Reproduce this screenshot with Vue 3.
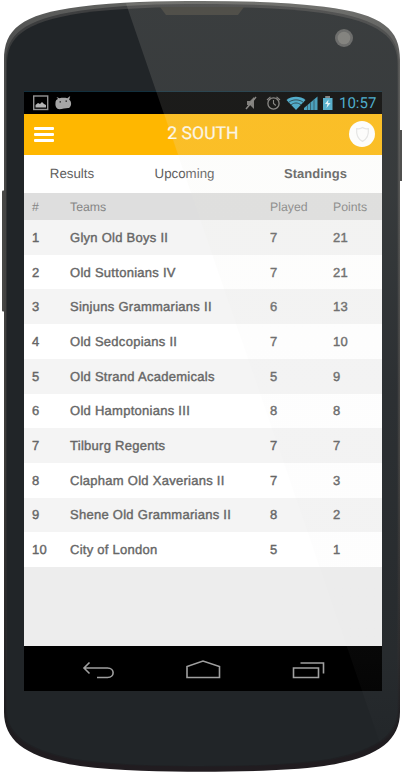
<script setup>
const tabs = [
  { label: 'Results', active: false },
  { label: 'Upcoming', active: false },
  { label: 'Standings', active: true },
]
const rows = [
  { team: 'Glyn Old Boys II', played: 7, points: 21 },
  { team: 'Old Suttonians IV', played: 7, points: 21 },
  { team: 'Sinjuns Grammarians II', played: 6, points: 13 },
  { team: 'Old Sedcopians II', played: 7, points: 10 },
  { team: 'Old Strand Academicals', played: 5, points: 9 },
  { team: 'Old Hamptonians III', played: 8, points: 8 },
  { team: 'Tilburg Regents', played: 7, points: 7 },
  { team: 'Clapham Old Xaverians II', played: 7, points: 3 },
  { team: 'Shene Old Grammarians II', played: 8, points: 2 },
  { team: 'City of London', played: 5, points: 1 },
]
</script>

<template>
  <div class="device">
    <svg class="shell" viewBox="0 0 402 772" aria-hidden="true">
      <defs>
        <linearGradient id="rim" x1="0" y1="0" x2="0" y2="1">
          <stop offset="0" stop-color="#60615f" />
          <stop offset=".06" stop-color="#4b4c4c" />
          <stop offset=".6" stop-color="#3c3b39" />
          <stop offset=".93" stop-color="#1d1c1f" />
          <stop offset="1" stop-color="#211c20" />
        </linearGradient>
        <linearGradient id="edge" x1="0" y1="0" x2="0" y2="1">
          <stop offset="0" stop-color="#3f4041" />
          <stop offset=".1" stop-color="#333536" />
          <stop offset=".85" stop-color="#28292b" />
          <stop offset=".95" stop-color="#1f2023" />
        </linearGradient>
      </defs>
      <rect x="2" y="190.500" width="5" height="121" rx="1" fill="#484846" />
      <rect x="397" y="130" width="6" height="51" rx="1" fill="#50504f" />
      <path d="M4 60C4 30 20 14 80 6.700C118 2 160 1 202 1S286 2 324 6.700C384 14 400 30 400 60V712C400 742 376 758 324 766C286 771 240 771.700 202 771.700S118 771 80 766C28 758 4 742 4 712Z" fill="url(#rim)" />
      <path d="M6 62C6 36 22 19 81 10.500C119 5 160 4 202 4S285 5 323 10.500C382 19 398.500 36 398.500 62V711C398.500 736 375 753 323 761C285 766 240 766.500 202 766.500S119 766 81 761C29 753 6 736 6 711Z" fill="url(#edge)" />
      <path d="M7 64C7 38 23 22 82 13C120 8 160 7 202 7S284 8 322 13C381 22 397.500 38 397.500 64V710C397.500 735 374 752 322 760C284 765 240 766 202 766S120 765 82 760C30 752 7 735 7 710Z" fill="#212528" />
      <path d="M160 7H244L238 15H166Z" fill="#3b3a35" />
      <circle cx="344" cy="38" r="9" fill="#5c5d5d" />
      <circle cx="344" cy="38" r="6.300" fill="#767673" />
    </svg>

    <main class="screen">
      <div class="status">
        <svg class="notices" viewBox="0 0 50 22">
          <rect x="9.700" y="4" width="14" height="13.500" fill="none" stroke="#939393" stroke-width="1.400" />
          <path d="M11.500 15.500V13L14 11L16 12L18 10L20 12L22 13V15.500Z" fill="#b4b4b4" />
          <path d="M31.500 10.500C31.500 8.500 32.500 7.500 34 7L32.500 5L35.500 6.300C38 5.700 41 5.700 43.300 6.300L46.200 4L45.200 7.700C48 9.500 47.600 14.500 45 16C42 15.600 36 18 33.500 16.800C31.500 15.500 31.200 13 31.500 10.500Z" fill="#a5a5a5" />
          <path d="M35.500 9.800H37M41.500 9.200H43" stroke="#222" stroke-width="1.300" />
        </svg>
        <svg class="signals" viewBox="0 0 92 22">
          <g fill="none" stroke="#7d7b79">
            <path d="M5 9H8L12 5V17L8 13H5Z" fill="#747270" stroke="none" />
            <path d="M4 17L14 5" stroke-width="1.500" />
            <circle cx="31.500" cy="11.500" r="5.600" stroke-width="1.300" />
            <path d="M31.500 8V11.500L33.800 13.500M25 8L28.500 4.800M34.500 4.800L38 8" stroke-width="1.100" />
          </g>
          <path d="M44.500 8C49.500 3.600 58.500 3.600 63.500 8L54 18Z" fill="#3fa5c8" />
          <path d="M46.500 10.500C50.500 7 57.500 7 61.500 10.500M49 13C52 10.300 56 10.300 59 13" fill="none" stroke="#1b3b48" stroke-width="1" />
          <path d="M62 18V16L75.500 4.500V18Z" fill="#3797b9" />
          <path d="M65.500 13V18M68.500 10V18M72 7.500V18" stroke="#1c4252" stroke-width=".8" />
          <path d="M81 6H83.500V4H88V6H90.500V18H81Z" fill="#46a8c9" />
          <path d="M83.500 4H88V6H83.500Z" fill="#777" />
          <path d="M86.500 7.500L83 12H85.400L84.500 16L88.500 11H86Z" fill="#e2f3f8" />
        </svg>
        <span class="clock">10:57</span>
      </div>

      <header class="bar">
        <span class="burger"><i></i><i></i><i></i></span>
        <h1>2 SOUTH</h1>
        <span class="badge">
          <svg viewBox="0 0 14 16">
            <path d="M7 1.500C8.500 2.800 10.500 2.800 12.500 2.500C13 8 12 12 7 14.500C2 12 1 8 1.500 2.500C3.500 2.800 5.500 2.800 7 1.500Z" fill="none" stroke="#e6e6e6" stroke-width="1.200" />
          </svg>
        </span>
      </header>

      <nav class="tabs">
        <span v-for="t in tabs" :key="t.label" class="tab" :class="{ active: t.active }">{{ t.label }}</span>
      </nav>

      <div class="line head">
        <span>#</span><span>Teams</span><span>Played</span><span>Points</span>
      </div>
      <div class="rows">
        <div v-for="(r, i) in rows" :key="r.team" class="line row">
          <span>{{ i + 1 }}</span><span>{{ r.team }}</span><span>{{ r.played }}</span><span>{{ r.points }}</span>
        </div>
      </div>
      <div class="rest"></div>

      <footer class="keys">
        <svg viewBox="0 0 358 45" fill="none" stroke="#a0a0a0" stroke-width="1.600">
          <path d="M65.500 16.500L60 22L65.500 27.500M60 22H83.500C91 22 91 31.500 83.500 31.500H73" />
          <path d="M163 31.500V20.500L179 15L195.500 20.500V31.500Z" />
          <path d="M269.500 22H294.500V31.500H269.500ZM276.500 17H299.500V27.500" />
        </svg>
      </footer>
    </main>

    <svg class="glare" viewBox="0 0 402 772" aria-hidden="true">
      <defs>
        <linearGradient id="shine" gradientUnits="userSpaceOnUse" x1="0" y1="0" x2="0" y2="772">
          <stop offset="0" stop-color="#e6e3d8" stop-opacity=".13" />
          <stop offset=".25" stop-color="#e9e9de" stop-opacity=".11" />
          <stop offset=".5" stop-color="#e2e2e4" stop-opacity=".06" />
          <stop offset=".85" stop-color="#d0d0d0" stop-opacity=".035" />
          <stop offset="1" stop-color="#d0d0d0" stop-opacity="0" />
        </linearGradient>
      </defs>
      <path d="M126 3.500C152 1.500 178 1 202 1S286 2 324 6.700C384 14 400 30 400 60V712C400 726 393 736 380 743Z" fill="url(#shine)" />
      <path d="M164.500 114H345V155H178.500ZM345 114H382V155H345ZM375 134A13 13 0 1 0 349 134A13 13 0 1 0 375 134Z" fill="#e8d8a8" fill-opacity=".1" fill-rule="evenodd" />
    </svg>
  </div>
</template>

<style>
body {
  background: #fff;
  overflow: hidden;
}
</style>

<style scoped>
.device {
  position: relative;
  box-sizing: border-box;
  width: 402px;
  height: 772px;
  padding: 91px 20px 81px 24px;
  font-family: "Liberation Sans", Arial, sans-serif;
  text-rendering: geometricPrecision;
  overflow: hidden;
}
.shell,
.glare {
  position: absolute;
  inset: 0;
  width: 402px;
  height: 772px;
}
.glare {
  pointer-events: none;
}
.screen {
  position: relative;
  display: flex;
  flex-direction: column;
  height: 600px;
  background: #ededed;
}
.status {
  box-sizing: border-box;
  display: flex;
  height: 23px;
  background: #000;
  border-top: 1px solid #12303e;
}
.notices {
  width: 50px;
  height: 22px;
}
.signals {
  width: 92px;
  height: 22px;
  margin-left: auto;
}
.clock {
  width: 43px;
  padding-left: 5px;
  font: 15px/22px Roboto, sans-serif;
  color: #3ba6cb;
}
.bar {
  display: grid;
  grid-template-columns: 60px 1fr 60px;
  align-items: center;
  height: 41px;
  background: #ffb700;
}
.burger {
  display: grid;
  gap: 2.500px;
  width: 20px;
  margin-left: 10px;
}
.burger i {
  height: 3.200px;
  border-radius: 1px;
  background: #fff;
}
h1 {
  margin: 0;
  text-align: center;
  font: 400 17.600px/41px Roboto, sans-serif;
  color: #fffbef;
  -webkit-text-stroke: .2px #fffbef;
}
.badge {
  display: grid;
  place-items: center;
  width: 26px;
  height: 26px;
  margin: 0 0 1px 27px;
  border-radius: 50%;
  background: #fff;
}
.badge svg {
  width: 15px;
  height: 17px;
}
.tabs {
  display: grid;
  grid-template-columns: 96px 129px 133px;
  height: 38px;
  background: #fff;
}
.tab {
  font-size: 13.300px;
  line-height: 37px;
  text-align: center;
  color: #606060;
}
.tab.active {
  box-sizing: border-box;
  border-bottom: 3px solid #fcb716;
  line-height: 38px;
  font-size: 13px;
  font-weight: 700;
}
.line {
  display: grid;
  grid-template-columns: 38px 200px 63px 1fr;
  align-items: center;
  padding-left: 8px;
}
.head {
  height: 27px;
  background: #dedede;
  color: #858585;
  font-size: 12.300px;
}
.rows {
  display: grid;
  grid-template-rows: repeat(10, 1fr);
  height: 347px;
  background: #fff;
}
.row {
  font-size: 13px;
  letter-spacing: .27px;
  color: #666;
  -webkit-text-stroke: .4px #666;
}
.row:nth-child(odd) {
  background: #f4f4f4;
}
.rest {
  flex: 1;
}
.keys {
  height: 45px;
  background: #000;
}
.keys svg {
  display: block;
  width: 358px;
  height: 45px;
}
</style>
